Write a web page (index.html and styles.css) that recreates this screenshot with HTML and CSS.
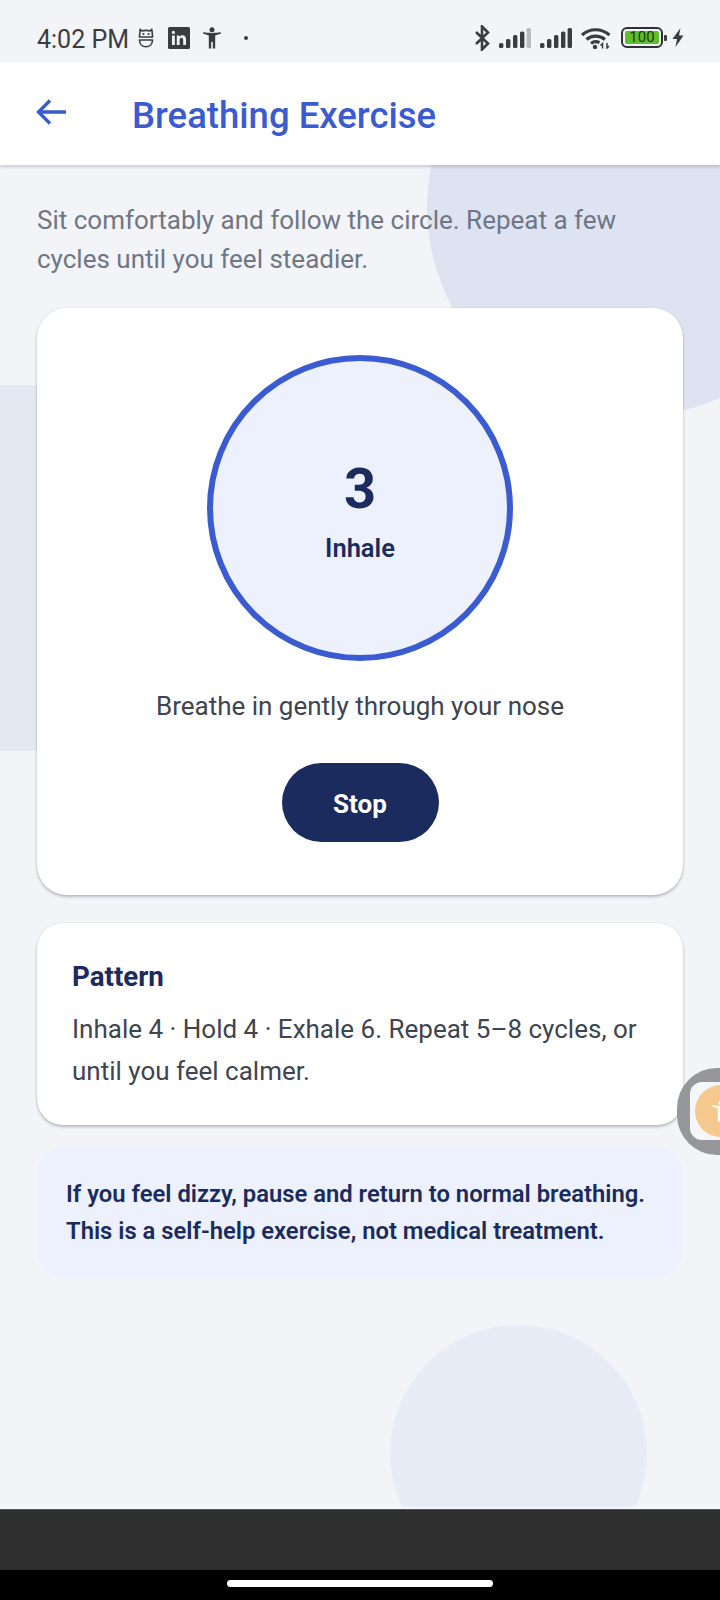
FILE: index.html
```html
<!DOCTYPE html>
<html lang="en">
<head>
<meta charset="utf-8">
<title>Breathing Exercise</title>
<link rel="stylesheet" href="styles.css">
</head>
<body>
<div class="phone">
  <div class="statusbar">
    <div class="status-left">
      <span class="time">4:02 PM</span>
      <svg class="ic-mask" viewBox="0 0 16 20" aria-hidden="true"><path d="M2.2 1.2 4 3C5.8 2.2 10.2 2.2 12 3L13.8 1.2 14.6 9H1.4ZM1.4 12H14.6C14.4 16 11.6 18.8 8 18.8S1.6 16 1.4 12Z" fill="none" stroke="#3a3c40" stroke-width="1.6" stroke-linejoin="round"/><circle cx="5.4" cy="6" r="1.1" fill="#3a3c40"/><circle cx="10.6" cy="6" r="1.1" fill="#3a3c40"/></svg>
      <svg class="ic-in" viewBox="0 0 22 22" aria-hidden="true"><rect width="22" height="22" rx="1.5" fill="#3a3c40"/><path d="M4 8.5H6.8V18H4ZM5.4 3.8A1.6 1.6 0 1 1 5.4 7 1.6 1.6 0 0 1 5.4 3.8ZM8.8 8.5H11.4V9.8C12 8.9 13 8.3 14.4 8.3 17 8.3 18 10 18 12.6V18H15.2V13.2C15.2 11.8 14.8 10.8 13.5 10.8S11.6 11.8 11.6 13.2V18H8.8Z" fill="#f2f4f8"/></svg>
      <svg class="ic-person" viewBox="0 0 20 22" aria-hidden="true"><circle cx="10" cy="2.8" r="2.5" fill="#3a3c40"/><path d="M1 6.4 1.6 5C5 6.2 15 6.2 18.4 5L19 6.4 13.2 8.4V21.5H10.8V15H9.2V21.5H6.8V8.4Z" fill="#3a3c40"/></svg>
      <span class="dot"></span>
    </div>
    <div class="status-right">
      <svg class="ic-bt" viewBox="0 0 16 26" aria-hidden="true"><path d="M2 7 14 18.5 8 24.5V1.5L14 7.5 2 19" fill="none" stroke="#3a3c40" stroke-width="2.6"/></svg>
      <svg class="ic-signal" viewBox="0 0 32 20" aria-hidden="true"><rect x="0" y="15" width="4.4" height="5" rx="1.6" fill="#3a3c40"/><rect x="7" y="11" width="4.4" height="9" rx="1.6" fill="#3a3c40"/><rect x="14" y="7" width="4.4" height="13" rx="1.6" fill="#3a3c40"/><rect x="21" y="3.5" width="4.4" height="16.5" rx="1.6" fill="#3a3c40"/><rect x="27.6" y="0" width="4.4" height="20" rx="1.6" fill="#b9bbbf"/></svg>
      <svg class="ic-signal" viewBox="0 0 32 20" aria-hidden="true"><rect x="0" y="15" width="4.4" height="5" rx="1.6" fill="#3a3c40"/><rect x="7" y="11" width="4.4" height="9" rx="1.6" fill="#3a3c40"/><rect x="14" y="7" width="4.4" height="13" rx="1.6" fill="#3a3c40"/><rect x="21" y="3.5" width="4.4" height="16.5" rx="1.6" fill="#3a3c40"/><rect x="27.6" y="0" width="4.4" height="20" rx="1.6" fill="#3a3c40"/></svg>
      <svg class="ic-wifi" viewBox="0 0 31 22" aria-hidden="true"><path d="M1.5 8C9 1 21 1 29 8M6 12.5C11 8 19 8 24.5 12.5M10.5 16.5C13 14.6 16.5 14.4 19 15.6" fill="none" stroke="#3a3c40" stroke-width="3.2"/><circle cx="14.5" cy="20" r="2.2" fill="#3a3c40"/><path d="M22 21.5V16.5L20 18.5M26.5 16V21L28.5 19" fill="none" stroke="#3a3c40" stroke-width="1.5"/></svg>
      <div class="battery"><span class="battery-level">100</span></div>
      <span class="battery-nub"></span>
      <svg class="ic-bolt" viewBox="0 0 12 19" aria-hidden="true"><path d="M8.5 0 0.5 11H5L3.5 19 11.5 7.5H7Z" fill="#3a3c40"/></svg>
    </div>
  </div>

  <header class="appbar">
    <svg class="back" viewBox="0 0 32 28" aria-hidden="true"><path d="M30 14H3M14 2.5 2.5 14 14 25.5" fill="none" stroke="#3b5bd0" stroke-width="3.4"/></svg>
    <h1 class="title">Breathing Exercise</h1>
  </header>

  <main class="content">
    <div class="blob blob-top"></div>
    <div class="blob blob-left"></div>
    <div class="blob blob-bottom"></div>

    <p class="intro">Sit comfortably and follow the circle. Repeat a few cycles until you feel steadier.</p>

    <section class="card card-main">
      <div class="breath">
        <span class="count">3</span>
        <span class="phase">Inhale</span>
      </div>
      <p class="cue">Breathe in gently through your nose</p>
      <button class="stop" type="button">Stop</button>
    </section>

    <section class="card card-pattern">
      <h2 class="pattern-title">Pattern</h2>
      <p class="pattern-text">Inhale 4 · Hold 4 · Exhale 6. Repeat 5–8 cycles, or until you feel calmer.</p>
    </section>

    <section class="notice">
      <p class="notice-text">If you feel dizzy, pause and return to normal breathing. This is a self-help exercise, not medical treatment.</p>
    </section>

    <div class="float">
      <div class="float-inner">
        <span class="float-btn">
          <svg class="float-ic" viewBox="0 0 20 22" aria-hidden="true"><circle cx="10" cy="2.8" r="2.5" fill="#fff"/><path d="M1 6.4 1.6 5C5 6.2 15 6.2 18.4 5L19 6.4 13.2 8.4V21.5H10.8V15H9.2V21.5H6.8V8.4Z" fill="#fff"/></svg>
        </span>
      </div>
    </div>
  </main>

  <div class="softbar"></div>
  <div class="navbar"><span class="home"></span></div>
</div>
</body>
</html>
```

FILE: styles.css
```css
* { box-sizing: border-box; }
html, body { margin: 0; padding: 0; }
body { background: #f2f4f8; font-family: Roboto, "Noto Sans", sans-serif; }
h1, h2, p { margin: 0; }

.phone { width: 720px; height: 1600px; display: flex; flex-direction: column; overflow: hidden; background: #f2f4f8; }

.statusbar { height: 62px; flex: none; display: flex; justify-content: space-between; align-items: center; padding: 13px 36px 0 37px; }
.status-left, .status-right { display: flex; align-items: center; }
.time { font-size: 25px; color: #3a3c40; width: 90px; white-space: nowrap; line-height: 34px; padding-top: 4px; }
.ic-mask { width: 16px; height: 20px; margin-left: 11px; }
.ic-in { width: 22px; height: 22px; margin-left: 14px; }
.ic-person { width: 20px; height: 22px; margin-left: 12px; }
.dot { width: 4px; height: 4px; border-radius: 50%; background: #3a3c40; margin-left: 22px; }
.ic-bt { width: 16px; height: 26px; }
.ic-signal { width: 32px; height: 20px; margin-left: 9px; }
.ic-wifi { width: 32px; height: 22px; margin-left: 8px; }
.battery { width: 42px; height: 21px; margin-left: 9px; border: 2.5px solid #2f3134; border-radius: 6px; padding: 2px; display: flex; }
.battery-level { flex: 1; background: #5fbe2c; border-radius: 2px; font-size: 15px; line-height: 13px; text-align: center; color: #1d3a10; }
.battery-nub { width: 3px; height: 6px; background: #3a3c40; margin-left: 1px; border-radius: 1px; }
.ic-bolt { width: 12px; height: 19px; margin-left: 5px; }

.appbar { height: 103px; flex: none; background: #fff; display: flex; align-items: center; padding-left: 36px; box-shadow: 0 2px 3px rgba(40,50,80,.2); position: relative; z-index: 2; }
.back { width: 32px; height: 28px; flex: none; margin-top: -3px; }
.title { font-size: 36.5px; font-weight: 500; color: #3b5bd0; margin: 4px 0 0 64px; line-height: 42px; }

.content { flex: 1; min-height: 0; position: relative; overflow: hidden; padding: 36px 37px 0; display: flex; flex-direction: column; }
.blob { position: absolute; }
.blob-top { width: 416px; height: 416px; border-radius: 50%; left: 427px; top: -165px; background: #dee3f2; }
.blob-left { width: 300px; height: 366px; left: -240px; top: 220px; background: #e4e8f2; }
.blob-bottom { width: 257px; height: 257px; border-radius: 50%; left: 390px; top: 1160px; background: #e8ecf6; }

.intro { position: relative; font-size: 26px; line-height: 39px; color: #6f7685; }

.card { position: relative; background: #fff; box-shadow: 0 2px 3px rgba(40,45,60,.28), 0 0 2px rgba(40,45,60,.1); }
.card-main { margin-top: 29px; height: 587px; border-radius: 30px; display: flex; flex-direction: column; align-items: center; padding-top: 47px; }
.breath { width: 306px; height: 306px; border-radius: 50%; border: 6px solid #3b5bd0; background: #ecf1fd; display: flex; flex-direction: column; align-items: center; justify-content: center; }
.count { font-size: 56px; font-weight: 700; line-height: 66px; color: #1b2b5e; margin-top: 3px; }
.phase { font-size: 25.5px; font-weight: 600; line-height: 30px; color: #1b2b5e; margin-top: 11px; }
.cue { font-size: 26px; line-height: 36px; color: #40444f; margin-top: 27px; }
.stop { width: 157px; height: 79px; border: 0; border-radius: 40px; background: #1b2b5e; color: #fff; font-family: inherit; font-size: 26px; font-weight: 700; line-height: 81px; padding: 1px 0 0; margin-top: 39px; }

.card-pattern { margin-top: 28px; height: 202px; border-radius: 26px; padding: 35px 35px 0; }
.pattern-title { font-size: 27.7px; font-weight: 700; line-height: 38px; color: #1b2b5e; }
.pattern-text { font-size: 26px; line-height: 42px; color: #40444f; margin-top: 12px; }

.notice { position: relative; margin-top: 22px; height: 130px; border-radius: 26px; background: #ecf1fd; padding: 29px 29px 0; }
.notice-text { font-size: 23.8px; font-weight: 600; line-height: 37px; color: #1b2b5e; }

.float { position: absolute; left: 677px; top: 903px; width: 90px; height: 87px; border-radius: 40px; background: #96979b; padding: 14px 0 0 13px; }
.float-inner { width: 62px; height: 58px; border-radius: 12px; background: #f5f6fa; padding: 3px 0 0 5px; }
.float-btn { display: flex; width: 52px; height: 52px; border-radius: 50%; background: #f5c88e; align-items: center; justify-content: center; }
.float-ic { width: 20px; height: 22px; }

.softbar { height: 61px; flex: none; background: #2f2f2f; border-top: 1px solid #55565a; position: relative; box-shadow: 0 -2px 0 rgba(250,251,253,.7); }
.navbar { height: 30px; flex: none; background: #000; display: flex; justify-content: center; padding-top: 10px; }
.home { width: 266px; height: 7px; border-radius: 4px; background: #fff; }
```
